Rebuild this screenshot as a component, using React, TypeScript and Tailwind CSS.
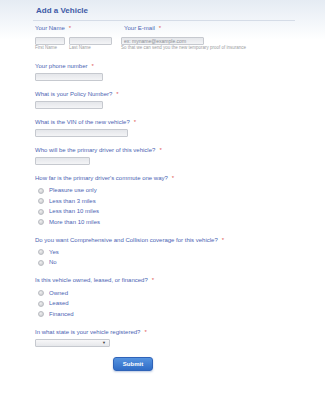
const font = "font-['Liberation_Sans',Arial,sans-serif]";

const Req = () => <span className="ml-[4px] text-[#e05a5a]">*</span>;

const Label = ({ children, className = '' }: { children: React.ReactNode; className?: string }) => (
  <div className={`h-[7px] whitespace-nowrap text-[6px] leading-[7px] text-[#4b64b3] ${className}`}>
    {children}
    <Req />
  </div>
);

const Input = ({ w, placeholder }: { w: string; placeholder?: string }) => (
  <div
    className={`flex h-[8px] items-center rounded-[1px] border border-[#c6c9cf] bg-[linear-gradient(to_bottom,#e4e6ea,#f3f4f6)] pl-[2px] text-[5px] leading-[6px] text-[#8a8d93] ${w}`}
  >
    {placeholder}
  </div>
);

const Field = ({ label, w, className = '' }: { label: string; w: string; className?: string }) => (
  <div className={className}>
    <Label>{label}</Label>
    <div className="mt-[2.5px]">
      <Input w={w} />
    </div>
  </div>
);

const Radio = ({ text }: { text: string }) => (
  <div className="flex h-[10.5px] items-center">
    <span className="ml-[2.5px] h-[6px] w-[6px] rounded-full border border-[#b9bcc1] bg-[radial-gradient(circle_at_40%_35%,#efefef,#c4c6ca)]" />
    <span className="ml-[5.5px] text-[6px] leading-[7px] text-[#4b64b3]">{text}</span>
  </div>
);

export default function App() {
  return (
    <div className={`min-h-[400px] w-full bg-[linear-gradient(to_bottom,#e5ebf3_0px,#f3f6fa_22px,#ffffff_40px)] ${font}`}>
      <div className="pl-[33px] pr-[30px] pt-[6px]">
        <div className="border-b border-[#d5dce7] pb-[5px] pl-[3px] text-[8px] font-bold leading-[9px] text-[#3e5aa6]">
          Add a Vehicle
        </div>
      </div>

      <div className="pl-[35px]">
        <div className="mt-[4px] flex">
          <div className="w-[86px]">
            <Label>Your Name</Label>
            <div className="mt-[5px] flex gap-[4px]">
              <div>
                <Input w="w-[30px]" />
                <div className="text-[4.5px] leading-[5px] text-[#9a9ca0]">First Name</div>
              </div>
              <div>
                <Input w="w-[43px]" />
                <div className="text-[4.5px] leading-[5px] text-[#9a9ca0]">Last Name</div>
              </div>
            </div>
          </div>
          <div>
            <Label className="pl-[3px]">Your E-mail</Label>
            <div className="mt-[5px]">
              <Input w="w-[83px]" placeholder="ex: myname@example.com" />
              <div className="whitespace-nowrap text-[4.5px] leading-[5px] text-[#9a9ca0]">
                So that we can send you the new temporary proof of insurance
              </div>
            </div>
          </div>
        </div>

        <Field className="mt-[13px]" label="Your phone number" w="w-[68px]" />
        <Field className="mt-[10.5px]" label="What is your Policy Number?" w="w-[68px]" />
        <Field className="mt-[10.5px]" label="What is the VIN of the new vehicle?" w="w-[93px]" />
        <Field className="mt-[10.5px]" label="Who will be the primary driver of this vehicle?" w="w-[55px]" />

        <Label className="mt-[10.5px]">How far is the primary driver's commute one way?</Label>
        <div className="mt-[3.5px]">
          <Radio text="Pleasure use only" />
          <Radio text="Less than 3 miles" />
          <Radio text="Less than 10 miles" />
          <Radio text="More than 10 miles" />
        </div>

        <Label className="mt-[9px]">Do you want Comprehensive and Collision coverage for this vehicle?</Label>
        <div className="mt-[3.5px]">
          <Radio text="Yes" />
          <Radio text="No" />
        </div>

        <Label className="mt-[9px]">Is this vehicle owned, leased, or financed?</Label>
        <div className="mt-[4px]">
          <Radio text="Owned" />
          <Radio text="Leased" />
          <Radio text="Financed" />
        </div>

        <Label className="mt-[9px]">In what state is your vehicle registered?</Label>
        <div className="mt-[3.5px] flex h-[8px] w-[75px] items-center justify-end rounded-[1px] border border-[#c6c9cf] bg-[linear-gradient(to_bottom,#f7f7f8,#e6e8eb)] pr-[3px]">
          <span className="text-[4px] leading-[4px] text-[#444]">▼</span>
        </div>

        <button className="ml-[78px] mt-[10px] flex h-[14px] w-[40px] items-center justify-center rounded-[3px] border border-[#2f63b8] bg-[linear-gradient(to_bottom,#5593e0,#2f6cc6)] text-[6px] font-bold leading-[7px] text-white shadow-[0_1px_2px_rgba(60,100,170,0.35)]">
          Submit
        </button>
      </div>
    </div>
  );
}
